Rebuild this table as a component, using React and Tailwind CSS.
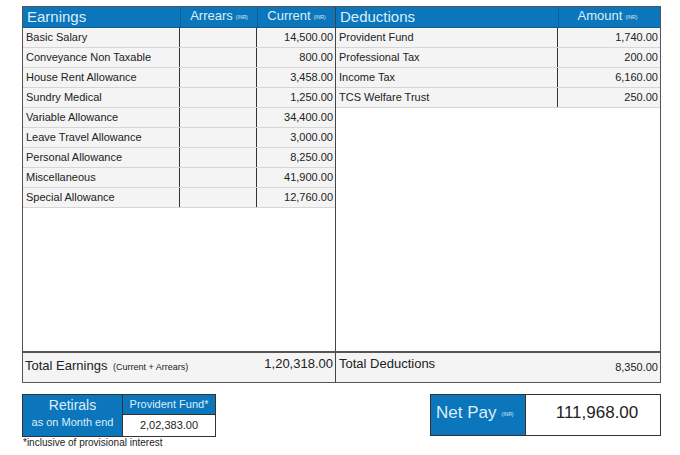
import React from "react";

const earnings = [
  ["Basic Salary", "14,500.00"],
  ["Conveyance Non Taxable", "800.00"],
  ["House Rent Allowance", "3,458.00"],
  ["Sundry Medical", "1,250.00"],
  ["Variable Allowance", "34,400.00"],
  ["Leave Travel Allowance", "3,000.00"],
  ["Personal Allowance", "8,250.00"],
  ["Miscellaneous", "41,900.00"],
  ["Special Allowance", "12,760.00"],
];

const deductions = [
  ["Provident Fund", "1,740.00"],
  ["Professional Tax", "200.00"],
  ["Income Tax", "6,160.00"],
  ["TCS Welfare Trust", "250.00"],
];

const Inr = () => <span className="text-[5px] ml-[3px] align-middle">(INR)</span>;

const App = () => {
  return (
    <div
      className="w-[680px] h-[455px] bg-white text-[#222] pt-[6px] pl-[22px]"
      style={{ fontFamily: '"Liberation Sans", Arial, sans-serif' }}
    >
      <div className="w-[639px] h-[377px] border border-[#555] flex flex-col">
        <div className="flex flex-1">
          {/* earnings */}
          <div className="w-[313px] flex flex-col border-r border-[#444]">
            <div className="h-[21px] flex bg-[#0b76bb] text-[#dceffa] border-b border-[#0a5f96]">
              <div className="w-[157px] pl-[4px] text-[15px] leading-[20px]">Earnings</div>
              <div className="w-[77px] text-center text-[13px] leading-[18px] border-l border-[#0a5f96]">
                Arrears<Inr />
              </div>
              <div className="flex-1 text-center text-[13px] leading-[18px] border-l border-[#0a5f96]">
                Current<Inr />
              </div>
            </div>
            <div className="flex-1">
              {earnings.map(([n, v]) => (
                <div key={n} className="h-[20px] flex bg-[#f4f4f4] border-b border-[#d6d6d6] text-[11px] leading-[19px]">
                  <div className="w-[157px] pl-[3px] border-r border-[#333]">{n}</div>
                  <div className="w-[77px] border-r border-[#333]"></div>
                  <div className="flex-1 text-right pr-[2px]">{v}</div>
                </div>
              ))}
            </div>
          </div>
          {/* deductions */}
          <div className="flex-1 flex flex-col">
            <div className="h-[21px] flex bg-[#0b76bb] text-[#dceffa] border-b border-[#0a5f96]">
              <div className="w-[222px] pl-[4px] text-[15px] leading-[20px]">Deductions</div>
              <div className="flex-1 text-center text-[13px] leading-[18px] border-l border-[#0a5f96] pr-[4px]">
                Amount<Inr />
              </div>
            </div>
            <div className="flex-1">
              {deductions.map(([n, v]) => (
                <div key={n} className="h-[20px] flex bg-[#f4f4f4] border-b border-[#d6d6d6] text-[11px] leading-[19px]">
                  <div className="w-[222px] pl-[3px] border-r border-[#333]">{n}</div>
                  <div className="flex-1 text-right pr-[2px]">{v}</div>
                </div>
              ))}
            </div>
          </div>
        </div>
        {/* totals */}
        <div className="h-[31px] flex border-t-2 border-[#555] bg-[#f4f4f4]">
          <div className="w-[313px] flex justify-between pl-[2px] pr-[2px] border-r border-[#444]">
            <span className="text-[13px] leading-[16px] mt-[5px]">
              Total Earnings <span className="text-[9px] ml-[2px]">(Current + Arrears)</span>
            </span>
            <span className="text-[13px] leading-[16px] mt-[3px]">1,20,318.00</span>
          </div>
          <div className="flex-1 flex justify-between pl-[3px] pr-[2px]">
            <span className="text-[13px] leading-[16px] mt-[3px]">Total Deductions</span>
            <span className="text-[11px] leading-[14px] mt-[7px]">8,350.00</span>
          </div>
        </div>
      </div>

      <div className="flex justify-between w-[639px] mt-[11px]">
        <div>
          <div className="flex w-[194px] h-[43px] border border-[#333]">
            <div className="w-[99px] bg-[#0b76bb] text-[#dceffa] flex flex-col items-center">
              <div className="text-[14px] leading-[18px] mt-[1px]">Retirals</div>
              <div className="text-[11px] leading-[16px]">as on Month end</div>
            </div>
            <div className="flex-1 flex flex-col border-l border-[#333]">
              <div className="h-[20px] bg-[#0b76bb] text-[#dceffa] text-[11px] leading-[18px] text-center border-b border-[#333]">
                Provident Fund*
              </div>
              <div className="flex-1 text-[11px] leading-[20px] text-center">2,02,383.00</div>
            </div>
          </div>
          <div className="text-[10px] leading-[12px] pl-[1px]">*inclusive of provisional interest</div>
        </div>
        <div className="flex w-[231px] h-[42px] border border-[#333]">
          <div className="w-[94px] bg-[#0b76bb] text-[#dceffa] text-[17px] leading-[36px] pl-[5px]">
            Net Pay<span className="text-[5px] ml-[5px] align-middle">(INR)</span>
          </div>
          <div className="flex-1 border-l border-[#333] text-[17px] leading-[36px] text-center pl-[8px]">
            111,968.00
          </div>
        </div>
      </div>
    </div>
  );
};

export default App;
